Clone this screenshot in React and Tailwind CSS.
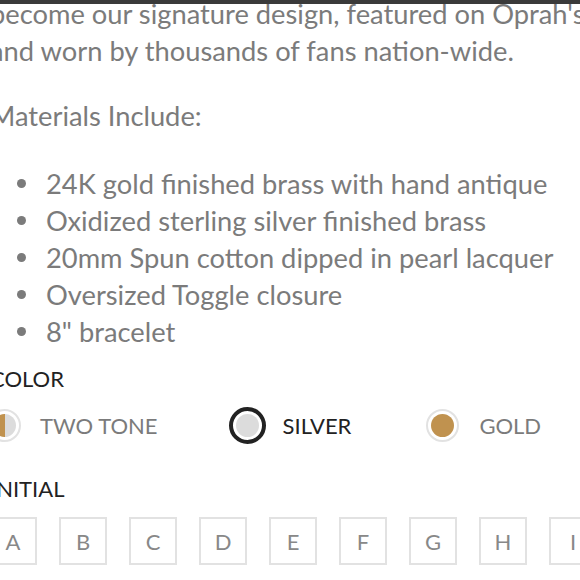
import React from "react";

const bullets = [
  "24K gold finished brass with hand antique",
  "Oxidized sterling silver finished brass",
  "20mm Spun cotton dipped in pearl lacquer",
  "Oversized Toggle closure",
  '8" bracelet',
];

const letters = ["A", "B", "C", "D", "E", "F", "G", "H", "I"];

function Swatch({ kind, selected }) {
  return (
    <div className="w-[37px] h-[37px] flex items-center justify-center shrink-0">
      <div
        className={
          selected
            ? "w-[37px] h-[37px] rounded-full border-[4px] border-[#222] bg-white flex items-center justify-center"
            : "w-[33px] h-[33px] rounded-full border-2 border-[#e2e2e2] bg-white flex items-center justify-center"
        }
      >
        {kind === "two" && (
          <div className="w-[23px] h-[23px] rounded-full overflow-hidden flex">
            <div className="w-1/2 h-full bg-[#c0924f]" />
            <div className="w-1/2 h-full bg-[#dcdcdc]" />
          </div>
        )}
        {kind === "silver" && <div className="w-[23px] h-[23px] rounded-full bg-[#dcdcdc]" />}
        {kind === "gold" && <div className="w-[23px] h-[23px] rounded-full bg-[#c0924f]" />}
      </div>
    </div>
  );
}

export default function App() {
  return (
    <div
      className="relative w-[580px] h-[580px] overflow-hidden bg-white"
      style={{ fontFamily: "Lato, 'Open Sans', sans-serif" }}
    >
      <div className="absolute top-0 left-0 right-0 h-[4px] bg-[#3a3a3a] z-10" />
      <div className="ml-[-10px] mt-[-5px] w-[640px]">
        <p className="text-[27.3px] leading-[37px] text-[#7b7b7b] whitespace-nowrap">
          become our signature design, featured on Oprah's
          <br />
          and worn by thousands of fans nation-wide.
        </p>
        <p className="mt-[28px] text-[27.3px] leading-[37px] text-[#7b7b7b] whitespace-nowrap">
          Materials Include:
        </p>
        <ul className="mt-[31px]">
          {bullets.map((b) => (
            <li key={b} className="flex items-center text-[27.3px] leading-[37px] text-[#7b7b7b] whitespace-nowrap">
              <span className="ml-[27px] w-[9px] h-[9px] rounded-full bg-[#7b7b7b] shrink-0" />
              <span className="ml-[20px]">{b}</span>
            </li>
          ))}
        </ul>
        <div className="mt-[16px] text-[22px] leading-[26px] text-[#222]">COLOR</div>
        <div className="mt-[15px] flex items-center ml-[-4px] gap-[71px]">
          <div className="flex items-center gap-[17px]">
            <Swatch kind="two" />
            <span className="text-[22px] text-[#7b7b7b]">TWO TONE</span>
          </div>
          <div className="flex items-center gap-[17px]">
            <Swatch kind="silver" selected />
            <span className="text-[22px] text-[#222]">SILVER</span>
          </div>
          <div className="flex items-center gap-[18px] ml-[2px]">
            <Swatch kind="gold" />
            <span className="text-[22px] text-[#7b7b7b]">GOLD</span>
          </div>
        </div>
        <div className="mt-[32px] text-[22px] leading-[26px] text-[#222]">INITIAL</div>
        <div className="mt-[15px] flex gap-[22px] ml-[-1px]">
          {letters.map((l) => (
            <div
              key={l}
              className="w-[48px] h-[48px] border-2 border-[#e2e2e2] flex items-center justify-center text-[22px] text-[#888] shrink-0"
            >
              {l}
            </div>
          ))}
        </div>
      </div>
    </div>
  );
}
